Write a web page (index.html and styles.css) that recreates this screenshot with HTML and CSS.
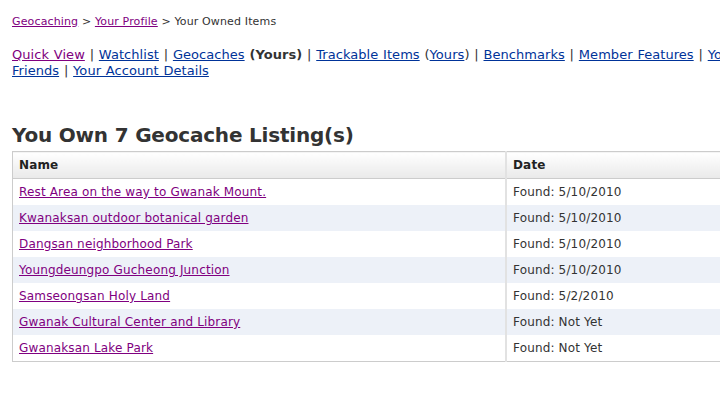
FILE: index.html
```html
<!DOCTYPE html>
<html lang="en">
<head>
    <meta charset="UTF-8">
    <title>Your Owned Items</title>
    <link rel="stylesheet" href="styles.css">
</head>
<body>
    <div id="content">
        <p class="breadcrumb">
            <a href="#" class="visited">Geocaching</a> &gt; <a href="#" class="visited">Your Profile</a> &gt; Your Owned Items
        </p>
        <p class="profile-nav">
            <a href="#" class="visited">Quick View</a> | <a href="#">Watchlist</a> | <a href="#">Geocaches</a> <strong>(Yours)</strong> | <a href="#">Trackable Items</a> (<a href="#">Yours</a>) | <a href="#">Benchmarks</a> | <a href="#">Member Features</a> | <a href="#">Your Friends</a> | <a href="#">Your Account Details</a>
        </p>

        <h2>You Own 7 Geocache Listing(s)</h2>
        <table class="owned">
            <thead>
                <tr>
                    <th class="col-name">Name</th>
                    <th>Date</th>
                </tr>
            </thead>
            <tbody>
                <tr><td><a href="#" class="visited">Rest Area on the way to Gwanak Mount.</a></td><td>Found: 5/10/2010</td></tr>
                <tr class="alt"><td><a href="#" class="visited">Kwanaksan outdoor botanical garden</a></td><td>Found: 5/10/2010</td></tr>
                <tr><td><a href="#" class="visited">Dangsan neighborhood Park</a></td><td>Found: 5/10/2010</td></tr>
                <tr class="alt"><td><a href="#" class="visited">Youngdeungpo Gucheong Junction</a></td><td>Found: 5/10/2010</td></tr>
                <tr><td><a href="#" class="visited">Samseongsan Holy Land</a></td><td>Found: 5/2/2010</td></tr>
                <tr class="alt"><td><a href="#" class="visited">Gwanak Cultural Center and Library</a></td><td>Found: Not Yet</td></tr>
                <tr><td><a href="#" class="visited">Gwanaksan Lake Park</a></td><td>Found: Not Yet</td></tr>
            </tbody>
        </table>
    </div>
</body>
</html>
```

FILE: styles.css
```css
html {
    overflow: hidden;
}

body {
    margin: 0;
    font-family: Verdana, 'DejaVu Sans', sans-serif;
    color: #333;
    background: #fff;
}

#content {
    width: 770px;
    padding: 0 12px;
}

a {
    color: #003399;
}

a.visited {
    color: #800080;
}

.breadcrumb {
    font-size: 11px;
    line-height: 16px;
    letter-spacing: 0.14px;
    margin: 14px 0 0;
}

.profile-nav {
    font-size: 13px;
    line-height: 16px;
    word-spacing: 0.6px;
    letter-spacing: 0.05px;
    margin: 17px 0 0;
}

h2 {
    font-size: 20px;
    line-height: 24px;
    letter-spacing: -0.2px;
    margin: 44px 0 4px;
    color: #333;
}

table.owned {
    width: 760px;
    border-collapse: collapse;
    border: 1px solid #ccc;
    font-size: 12px;
    letter-spacing: 0.16px;
}

table.owned th {
    text-align: left;
    height: 26px;
    padding: 0 6px;
    background: linear-gradient(#fff, #e9e9e9);
    border-bottom: 1px solid #ccc;
    color: #222;
}

table.owned td {
    height: 26px;
    padding: 0 6px;
}

table.owned .col-name {
    width: 480px;
}

table.owned th + th,
table.owned td + td {
    border-left: 2px solid #e2e2e2;
}

table.owned tr.alt td {
    background: #edf1f8;
}
```
